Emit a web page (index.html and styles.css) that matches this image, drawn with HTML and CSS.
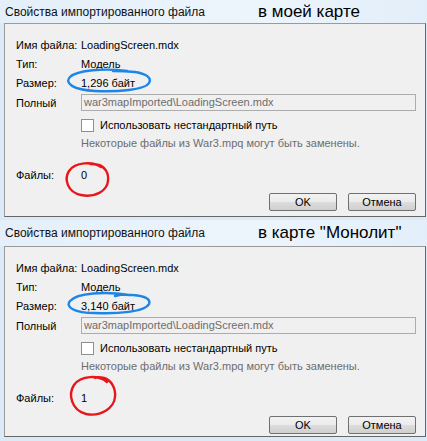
FILE: index.html
```html
<!DOCTYPE html>
<html lang="ru">
<head>
    <meta charset="UTF-8">
    <meta name="viewport" content="width=device-width, initial-scale=1.0">
    <title>Свойства импортированного файла</title>
    <link rel="stylesheet" href="styles.css">
</head>
<body>
    <div class="dialog">
        <div class="titlebar">
            <span class="title">Свойства импортированного файла</span>
            <span class="note">в моей карте</span>
        </div>
        <div class="panel">
            <div class="props">
                <span>Имя файла:</span><span>LoadingScreen.mdx</span>
                <span>Тип:</span><span>Модель</span>
                <span>Размер:</span><span>1,296 байт</span>
                <span>Полный</span><div class="path">war3mapImported\LoadingScreen.mdx</div>
            </div>
            <label class="check"><span class="box"></span>Использовать нестандартный путь</label>
            <div class="hint">Некоторые файлы из War3.mpq могут быть заменены.</div>
            <div class="files"><span>Файлы:</span><span>0</span></div>
            <div class="buttons">
                <button class="btn">OK</button>
                <button class="btn">Отмена</button>
            </div>
            <svg class="mark size-mark" width="90" height="26" viewBox="0 0 90 26">
                <path d="M62 3 C40 0 12 2 5 9 C-1 15 8 22 30 23 C52 24 80 22 84 15 C87 10 82 6 70 4 C60 3 52 3 48 3" />
            </svg>
            <svg class="mark files-mark" width="52" height="38" viewBox="0 0 52 38">
                <path d="M38 6 C30 0 12 1 6 10 C1 18 4 31 18 34 C32 37 44 30 45 20 C46 12 42 6 36 4 C32 3 29 3 27 3" />
            </svg>
        </div>
    </div>

    <div class="dialog second">
        <div class="titlebar">
            <span class="title">Свойства импортированного файла</span>
            <span class="note">в карте "Монолит"</span>
        </div>
        <div class="panel">
            <div class="props">
                <span>Имя файла:</span><span>LoadingScreen.mdx</span>
                <span>Тип:</span><span>Модель</span>
                <span>Размер:</span><span>3,140 байт</span>
                <span>Полный</span><div class="path">war3mapImported\LoadingScreen.mdx</div>
            </div>
            <label class="check"><span class="box"></span>Использовать нестандартный путь</label>
            <div class="hint">Некоторые файлы из War3.mpq могут быть заменены.</div>
            <div class="files"><span>Файлы:</span><span>1</span></div>
            <div class="buttons">
                <button class="btn">OK</button>
                <button class="btn">Отмена</button>
            </div>
            <svg class="mark size-mark" width="90" height="26" viewBox="0 0 90 26">
                <path d="M64 4 C40 0 12 2 5 10 C0 16 9 22 30 22 C52 23 80 21 84 13 C86 8 80 5 68 4 C60 3 54 4 50 5" />
            </svg>
            <svg class="mark files-mark red-two" width="54" height="44" viewBox="0 0 54 44">
                <path d="M40 8 C32 1 14 1 7 11 C1 20 4 36 19 40 C34 43 47 34 48 23 C49 14 44 6 37 4 C33 3 30 3 28 4" />
            </svg>
        </div>
    </div>
</body>
</html>
```

FILE: styles.css
```css
body {
    margin: 0;
    width: 427px;
    height: 441px;
    overflow: hidden;
    background: #dce9f6;
    font-family: "Liberation Sans", Arial, sans-serif;
    font-size: 11px;
    color: #000;
}
.dialog {
    height: 220px;
}
.titlebar {
    display: flex;
    align-items: center;
    height: 23px;
    padding-left: 5px;
    background: linear-gradient(90deg, #e4eff9, #edf5fc 60%, #e2eef9);
}
.second .titlebar {
    height: 26px;
}
.title {
    width: 253px;
    font-size: 12px;
    color: #111;
}
.note {
    font-size: 17px;
    color: #000;
}
.panel {
    position: relative;
    box-sizing: border-box;
    height: 194px;
    margin: 0 1px 0 4px;
    padding: 11px 9px 0 11px;
    background: #f0f0f0;
    border: 1px solid #9a9a9a;
    border-right-color: #666;
    border-bottom-color: #666;
}
.second .panel {
    height: 191px;
}
.props {
    display: grid;
    grid-template-columns: 65px 1fr;
    grid-auto-rows: 19.3px;
    align-items: center;
}
.path {
    height: 17px;
    line-height: 15px;
    box-sizing: border-box;
    padding-left: 2px;
    border: 1px solid #acacac;
    color: #6d6d6d;
}
.check {
    display: flex;
    align-items: center;
    margin: 6px 0 0 65px;
    height: 14px;
}
.box {
    width: 11px;
    height: 11px;
    margin-right: 6px;
    border: 1px solid #8e8f8f;
    background: #fff;
}
.hint {
    margin: 5px 0 0 65px;
    color: #6d6d6d;
}
.files {
    display: grid;
    grid-template-columns: 65px 1fr;
    margin-top: 20px;
}
.buttons {
    display: flex;
    justify-content: flex-end;
    gap: 11px;
    margin-top: 12px;
}
.btn {
    width: 68px;
    height: 18px;
    padding: 0;
    font-family: inherit;
    font-size: 11px;
    color: #000;
    border: 1px solid #707070;
    border-radius: 2px;
    background: linear-gradient(#f2f2f2, #ebebeb 50%, #dddddd 51%, #cfcfcf);
}
.mark {
    position: absolute;
    fill: none;
    stroke-width: 2.4;
    stroke-linecap: round;
}
.size-mark {
    left: 60px;
    top: 44px;
    stroke: #1c86e8;
}
.files-mark {
    left: 58px;
    top: 137px;
    stroke: #e8161a;
}
.files-mark.red-two {
    left: 62px;
    top: 127px;
}
```
